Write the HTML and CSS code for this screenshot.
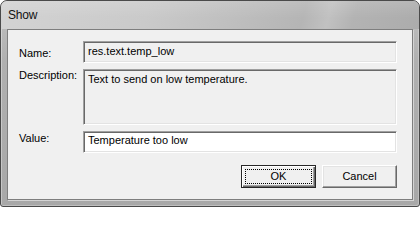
FILE: index.html
```html
<!DOCTYPE html>
<html>
<head>
<meta charset="utf-8">
<link rel="stylesheet" href="styles.css">
</head>
<body>
<div class="window">
  <div class="titlebar"><span class="title">Show</span></div>
  <div class="client">
    <div class="form">
      <label class="lbl lbl-name">Name:</label>
      <div class="field ro f-line">res.text.temp_low</div>
      <label class="lbl lbl-desc">Description:</label>
      <div class="field ro f-desc">Text to send on low temperature.</div>
      <label class="lbl lbl-value">Value:</label>
      <div class="field edit f-value">Temperature too low</div>
    </div>
    <div class="buttons">
      <button class="btn default"><span class="cap">OK</span></button>
      <button class="btn"><span class="cap">Cancel</span></button>
    </div>
  </div>
</div>
</body>
</html>
```

FILE: styles.css
```css
html, body {
  margin: 0;
  padding: 0;
  background: #ffffff;
}

.window {
  box-sizing: border-box;
  width: 420px;
  height: 207px;
  border: 1px solid #4a4a4a;
  border-radius: 7px 7px 3px 3px;
  background: linear-gradient(to bottom, #c2c2c2 0px, #b0b0b0 60px, #a8a8a8 100%);
  box-shadow: inset 1px 1px 0 rgba(255,255,255,0.35), inset -1px -1px 0 rgba(255,255,255,0.25);
  padding: 0 6px 6px 6px;
  display: flex;
  flex-direction: column;
  font-family: "Liberation Sans", Arial, sans-serif;
  font-size: 11px;
  line-height: 13px;
  color: #000;
  overflow: hidden;
}

.titlebar {
  height: 28px;
  margin: 0 -6px;
  padding: 7px 0 0 7px;
  box-sizing: border-box;
  border-radius: 6px 6px 0 0;
  background:
    linear-gradient(to bottom, rgba(255,255,255,0.12), rgba(255,255,255,0) 60%),
    linear-gradient(105deg, #d3d3d3 0%, #cacaca 35%, #bfbfbf 55%, #b5b5b5 72%, #c1c1c1 78%, #b3b3b3 84%, #acacac 100%);
}

.title {
  font-size: 12px;
  line-height: 14px;
  color: #111;
  letter-spacing: -0.2px;
}

.client {
  flex: 1;
  background: #f0f0f0;
  border: 1px solid #7e7e7e;
  box-shadow: 1px 1px 0 #d4d4d4;
  display: flex;
  flex-direction: column;
}

.form {
  display: grid;
  grid-template-columns: 64px 1fr;
  grid-template-rows: 22px 56px 22px;
  row-gap: 6px;
  padding: 11px 15px 0 11px;
}

.lbl {
  display: block;
}
.lbl-name { padding-top: 6px; }
.lbl-desc { padding-top: 0; }
.lbl-value { padding-top: 1px; }

.field {
  box-sizing: border-box;
  border: 1px solid;
  border-color: #a0a0a0 #ffffff #ffffff #a0a0a0;
  box-shadow: inset 1px 1px 0 #696969, inset -1px -1px 0 #e3e3e3;
  padding: 3px 4px 0 4px;
  white-space: nowrap;
  overflow: hidden;
}
.ro { background: #f0f0f0; }
.edit { background: #ffffff; padding-top: 2px; }

.buttons {
  display: flex;
  justify-content: flex-end;
  gap: 6px;
  margin-top: 12px;
  padding-right: 15px;
}

.btn {
  box-sizing: border-box;
  width: 75px;
  height: 23px;
  margin: 0;
  padding: 3px;
  background: #f0f0f0;
  border: 1px solid;
  border-color: #ffffff #696969 #696969 #ffffff;
  box-shadow: inset -1px -1px 0 #a0a0a0, inset 1px 1px 0 #e3e3e3;
  font-family: "Liberation Sans", Arial, sans-serif;
  font-size: 11px;
  line-height: 13px;
  color: #000;
  display: flex;
}

.btn .cap {
  flex: 1;
  display: flex;
  align-items: center;
  justify-content: center;
  border: 1px solid transparent;
  padding-bottom: 1px;
}

.btn.default {
  border: 1px solid #262626;
  box-shadow: inset 1px 1px 0 #ffffff, inset -1px -1px 0 #696969, inset -2px -2px 0 #a0a0a0;
}

.btn.default .cap {
  border: 1px dotted #000;
}
```
